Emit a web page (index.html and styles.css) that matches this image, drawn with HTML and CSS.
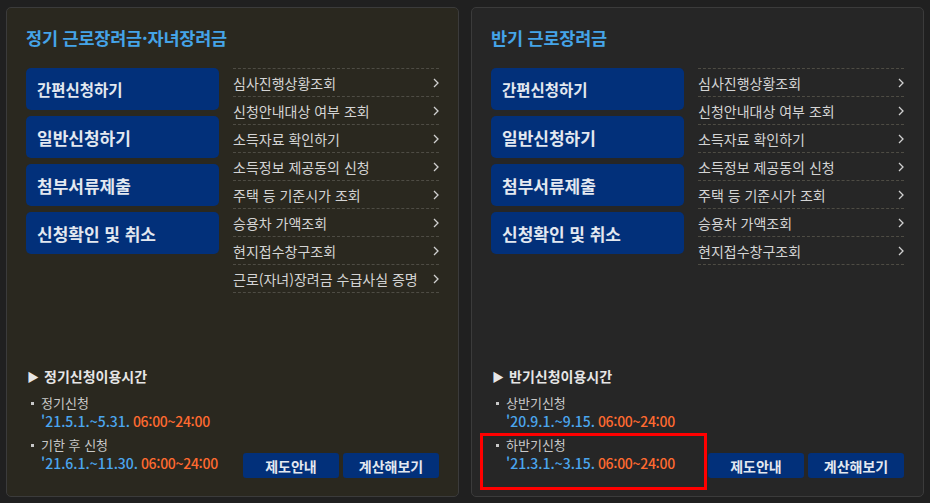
FILE: index.html
```html
<!DOCTYPE html>
<html lang="ko">
<head>
  <meta charset="UTF-8">
  <meta name="viewport" content="width=device-width, initial-scale=1.0">
  <title>근로장려금 신청</title>
  <link rel="stylesheet" href="styles.css">
</head>
<body>
  <div class="panel panel-regular">
    <h2 class="panel-title">정기 근로장려금·자녀장려금</h2>
    <div class="panel-top">
      <div class="main-buttons">
        <a class="big-btn small-text" href="#">간편신청하기</a>
        <a class="big-btn" href="#">일반신청하기</a>
        <a class="big-btn" href="#">첨부서류제출</a>
        <a class="big-btn" href="#">신청확인 및 취소</a>
      </div>
      <ul class="link-list">
        <li><a href="#">심사진행상황조회<svg class="chev" viewBox="0 0 6 10"><polyline points="1,1 5,5 1,9"/></svg></a></li>
        <li><a href="#">신청안내대상 여부 조회<svg class="chev" viewBox="0 0 6 10"><polyline points="1,1 5,5 1,9"/></svg></a></li>
        <li><a href="#">소득자료 확인하기<svg class="chev" viewBox="0 0 6 10"><polyline points="1,1 5,5 1,9"/></svg></a></li>
        <li><a href="#">소득정보 제공동의 신청<svg class="chev" viewBox="0 0 6 10"><polyline points="1,1 5,5 1,9"/></svg></a></li>
        <li><a href="#">주택 등 기준시가 조회<svg class="chev" viewBox="0 0 6 10"><polyline points="1,1 5,5 1,9"/></svg></a></li>
        <li><a href="#">승용차 가액조회<svg class="chev" viewBox="0 0 6 10"><polyline points="1,1 5,5 1,9"/></svg></a></li>
        <li><a href="#">현지접수창구조회<svg class="chev" viewBox="0 0 6 10"><polyline points="1,1 5,5 1,9"/></svg></a></li>
        <li><a href="#">근로(자녀)장려금 수급사실 증명<svg class="chev" viewBox="0 0 6 10"><polyline points="1,1 5,5 1,9"/></svg></a></li>
      </ul>
    </div>
    <div class="panel-bottom">
      <div class="time-info">
        <h3 class="time-title"><span class="tri">▶</span>정기신청이용시간</h3>
        <ul class="time-list">
          <li>
            <span class="time-label">정기신청</span>
            <span class="time-date"><span class="date">'21.5.1.~5.31.</span> <span class="hours">06:00~24:00</span></span>
          </li>
          <li>
            <span class="time-label">기한 후 신청</span>
            <span class="time-date"><span class="date">'21.6.1.~11.30.</span> <span class="hours">06:00~24:00</span></span>
          </li>
        </ul>
      </div>
      <div class="sub-buttons">
        <a class="sub-btn" href="#">제도안내</a>
        <a class="sub-btn" href="#">계산해보기</a>
      </div>
    </div>
  </div>

  <div class="panel panel-half">
    <h2 class="panel-title">반기 근로장려금</h2>
    <div class="panel-top">
      <div class="main-buttons">
        <a class="big-btn small-text" href="#">간편신청하기</a>
        <a class="big-btn" href="#">일반신청하기</a>
        <a class="big-btn" href="#">첨부서류제출</a>
        <a class="big-btn" href="#">신청확인 및 취소</a>
      </div>
      <ul class="link-list">
        <li><a href="#">심사진행상황조회<svg class="chev" viewBox="0 0 6 10"><polyline points="1,1 5,5 1,9"/></svg></a></li>
        <li><a href="#">신청안내대상 여부 조회<svg class="chev" viewBox="0 0 6 10"><polyline points="1,1 5,5 1,9"/></svg></a></li>
        <li><a href="#">소득자료 확인하기<svg class="chev" viewBox="0 0 6 10"><polyline points="1,1 5,5 1,9"/></svg></a></li>
        <li><a href="#">소득정보 제공동의 신청<svg class="chev" viewBox="0 0 6 10"><polyline points="1,1 5,5 1,9"/></svg></a></li>
        <li><a href="#">주택 등 기준시가 조회<svg class="chev" viewBox="0 0 6 10"><polyline points="1,1 5,5 1,9"/></svg></a></li>
        <li><a href="#">승용차 가액조회<svg class="chev" viewBox="0 0 6 10"><polyline points="1,1 5,5 1,9"/></svg></a></li>
        <li><a href="#">현지접수창구조회<svg class="chev" viewBox="0 0 6 10"><polyline points="1,1 5,5 1,9"/></svg></a></li>
      </ul>
    </div>
    <div class="panel-bottom">
      <div class="time-info">
        <h3 class="time-title"><span class="tri">▶</span>반기신청이용시간</h3>
        <ul class="time-list">
          <li>
            <span class="time-label">상반기신청</span>
            <span class="time-date"><span class="date">'20.9.1.~9.15.</span> <span class="hours">06:00~24:00</span></span>
          </li>
          <li>
            <span class="time-label">하반기신청</span>
            <span class="time-date"><span class="date">'21.3.1.~3.15.</span> <span class="hours">06:00~24:00</span></span>
          </li>
        </ul>
      </div>
      <div class="sub-buttons">
        <a class="sub-btn" href="#">제도안내</a>
        <a class="sub-btn" href="#">계산해보기</a>
      </div>
    </div>
    <div class="highlight"></div>
  </div>
</body>
</html>
```

FILE: styles.css
```css
* {
  box-sizing: border-box;
}
body {
  margin: 0;
  padding: 7px 6px 6px;
  background: #202020;
  font-family: "Noto Sans CJK KR", "Noto Sans", sans-serif;
  display: flex;
  gap: 12px;
}
a {
  text-decoration: none;
  color: inherit;
}
ul {
  list-style: none;
  margin: 0;
  padding: 0;
}
.panel {
  position: relative;
  width: 453px;
  height: 490px;
  border: 1px solid #3b3b3b;
  border-radius: 5px;
  padding: 18px 19px 18px;
  display: flex;
  flex-direction: column;
}
.panel-regular {
  background: #2a281f;
}
.panel-half {
  background: #262626;
}
.panel-title {
  margin: 0 0 18px;
  font-size: 17.5px;
  line-height: 24px;
  font-weight: bold;
  color: #45a4e8;
  letter-spacing: -0.2px;
}
.panel-top {
  display: flex;
  gap: 14px;
}
.main-buttons {
  width: 193px;
  display: flex;
  flex-direction: column;
  gap: 6px;
}
.big-btn {
  height: 42px;
  display: flex;
  align-items: center;
  padding-left: 11px;
  background: #02307a;
  border-radius: 5px;
  color: #e3e8f0;
  font-size: 17px;
  font-weight: bold;
}
.big-btn.small-text {
  font-size: 15.5px;
}
.link-list {
  width: 206px;
  border-top: 1px dashed #4e4c44;
}
.link-list li {
  border-bottom: 1px dashed #4e4c44;
}
.link-list a {
  height: 27px;
  display: flex;
  align-items: center;
  justify-content: space-between;
  font-size: 14px;
  color: #d4d4d4;
}
.chev {
  width: 6px;
  height: 10px;
  fill: none;
  stroke: #d0d0d0;
  stroke-width: 1.3;
}
.panel-bottom {
  margin-top: auto;
  display: flex;
  align-items: flex-end;
  justify-content: space-between;
}
.time-info {
  padding-left: 1px;
  margin-bottom: 6px;
}
.time-title {
  margin: 0 0 7px;
  font-size: 14px;
  line-height: 20px;
  font-weight: bold;
  color: #e6e6e6;
}
.tri {
  font-size: 12px;
  margin-right: 5px;
  color: #e6e6e6;
}
.time-list li {
  display: flex;
  flex-direction: column;
  margin-bottom: 6px;
}
.time-list li:last-child {
  margin-bottom: 0;
}
.time-label {
  position: relative;
  padding-left: 14px;
  font-size: 13px;
  line-height: 18px;
  color: #c8c8c8;
}
.time-label::before {
  content: "";
  position: absolute;
  left: 4px;
  top: 8px;
  width: 3px;
  height: 3px;
  background: #c8c8c8;
}
.time-date {
  padding-left: 14px;
  font-size: 14px;
  line-height: 18px;
  font-weight: 500;
  word-spacing: -1px;
}
.date {
  color: #4ba6ee;
}
.hours {
  color: #ff6a30;
  letter-spacing: -0.3px;
}
.sub-buttons {
  display: flex;
  gap: 4px;
}
.sub-btn {
  width: 96px;
  height: 25px;
  display: flex;
  align-items: center;
  justify-content: center;
  background: #02307a;
  border-radius: 3px;
  font-size: 14px;
  font-weight: bold;
  color: #e3e8f0;
}
.highlight {
  position: absolute;
  left: 8px;
  bottom: 6px;
  width: 227px;
  height: 57px;
  border: 3px solid #ff0000;
}
```
